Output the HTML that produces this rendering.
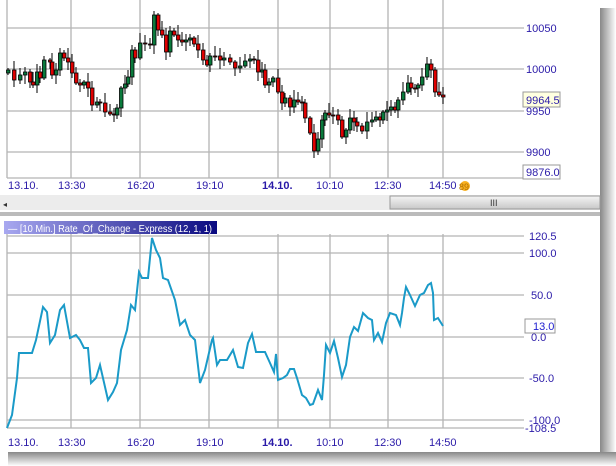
<!DOCTYPE html>
<html><head><meta charset="utf-8"><style>
html,body{margin:0;padding:0;background:#fff;width:616px;height:466px;overflow:hidden}
svg{display:block}
text{font-family:"Liberation Sans",sans-serif;font-size:11px;fill:#2a1aa8}
</style></head><body>
<svg id="s" width="616" height="466" viewBox="0 0 616 466">
<defs>
<linearGradient id="tb" x1="0" x2="1"><stop offset="0" stop-color="#a8a8f0"/><stop offset="1" stop-color="#0a0a80"/></linearGradient>
<linearGradient id="sh" x1="0" x2="1"><stop offset="0" stop-color="#888"/><stop offset="1" stop-color="#fff"/></linearGradient>
<linearGradient id="shb" x1="0" y1="0" x2="0" y2="1"><stop offset="0" stop-color="#888"/><stop offset="1" stop-color="#fff"/></linearGradient>
<linearGradient id="thumb" x1="0" y1="0" x2="0" y2="1"><stop offset="0" stop-color="#f4f4f4"/><stop offset="1" stop-color="#c8c8c8"/></linearGradient>
</defs>
<rect x="600" y="8" width="16" height="458" fill="url(#sh)"/>
<rect x="8" y="452" width="608" height="14" fill="url(#shb)"/>
<rect x="0" y="0" width="600" height="452" fill="#fff"/>
<g stroke="#b4b4b4" stroke-width="1.3" fill="none">
<path d="M7 0V178M71 0V178M140 0V178M209 0V178M278 0V178M330 0V178M388 0V178M443 0V178"/>
<path d="M7 28H524M7 69H524M7 111H524M7 152H524M7 178H524"/>
<path d="M7 234V428M71 234V428M140 234V428M209 234V428M278 234V428M330 234V428M388 234V428M443 234V428"/>
<path d="M7 236H524M7 253H524M7 295H524M7 337H524M7 378H524M7 420H524M7 428H524"/>
</g>
<g id="cd"></g>
<polyline fill="none" stroke="#1a9ac8" stroke-width="2" points="7,428 12,415 17,378 19,353 32,353 36,340 43,307 47,312 50,343 55,335 60,310 64,305 70,338 76,335 80,340 84,348 88,348 91,383 96,378 100,365 108,400 113,392 117,383 121,350 127,330 131,305 135,310 139,272 142,278 148,278 152,238 156,250 160,258 163,278 168,280 175,300 180,325 185,320 190,335 195,340 200,383 205,370 212,340 213,338 217,365 220,360 227,360 233,350 238,367 243,368 248,343 252,334 256,352 265,352 270,363 274,372 276,354 278,380 283,378 287,375 290,369 294,369 297,378 302,395 306,398 310,405 313,404 318,390 322,400 324,375 326,345 330,353 334,341 338,358 342,377 346,365 350,337 354,327 358,331 363,313 368,318 372,320 374,340 378,333 382,342 386,323 390,313 396,315 400,325 402,313 404,298 406,287 410,295 415,306 420,295 424,293 428,285 431,283 433,293 434,320 438,318 443,326"/>
<g>
<text x="526" y="32">10050</text><text x="526" y="73">10000</text><text x="526" y="115">9950</text><text x="526" y="156">9900</text>
<rect x="523" y="92" width="37" height="15" fill="#ffffe0" stroke="#999"/><text x="526" y="104">9964.5</text>
<rect x="523" y="165" width="37" height="14" fill="#fff" stroke="#999"/><text x="526" y="176">9876.0</text>
<text x="8" y="189">13.10.</text><text x="58" y="189">13:30</text><text x="127" y="189">16:20</text><text x="196" y="189">19:10</text><text x="262" y="189" style="font-weight:bold">14.10.</text><text x="316" y="189">10:10</text><text x="374" y="189">12:30</text><text x="429" y="189">14:50</text>
<circle cx="465" cy="186" r="5" fill="#f8b020"/><text x="459" y="190" style="font-size:9px;fill:#b07000">89</text>
<rect x="0" y="195" width="600" height="15" fill="#ececec"/><rect x="390" y="196" width="210" height="13" fill="url(#thumb)" stroke="#999"/>
<text x="490" y="206" style="font-size:9px;fill:#333">III</text><text x="3" y="207" style="font-size:8px;fill:#333">◂</text>
<path d="M0 213H600M0 215H600" stroke="#777"/>
<rect x="4" y="221" width="213" height="13" fill="url(#tb)"/>
<text x="8" y="232" textLength="204" lengthAdjust="spacingAndGlyphs" style="fill:#fff;font-size:10.5px">— [10 Min.] Rate_Of_Change - Express  (12, 1, 1)</text>
<text x="529" y="240">120.5</text><text x="529" y="257">100.0</text><text x="531" y="299">50.0</text><text x="531" y="341">0.0</text><text x="529" y="382">-50.0</text><text x="529" y="424">-100.0</text><text x="525" y="432">-108.5</text>
<rect x="525" y="319" width="30" height="14" fill="#fff" stroke="#999"/><text x="533" y="330" style="fill:#2020d0">13.0</text>
<text x="8" y="446">13.10.</text><text x="58" y="446">13:30</text><text x="127" y="446">16:20</text><text x="196" y="446">19:10</text><text x="262" y="446" style="font-weight:bold">14.10.</text><text x="316" y="446">10:10</text><text x="374" y="446">12:30</text><text x="429" y="446">14:50</text>
</g>
</svg>
<script>
var d=[[8,70],[14,80],[20,75],[25,72],[30,82],[33,85],[37,72],[40,78],[44,60],[50,62],[52,75],[56,70],[60,53],[64,58],[68,62],[72,73],[76,83],[80,85],[84,82],[88,88],[92,105],[97,102],[100,103],[105,112],[110,114],[114,115],[117,108],[121,88],[125,84],[128,77],[132,50],[135,58],[140,43],[145,44],[150,45],[154,15],[158,30],[162,35],[166,52],[170,31],[174,35],[178,40],[182,42],[186,40],[190,38],[194,44],[198,50],[203,60],[207,65],[210,56],[215,56],[220,60],[224,58],[230,62],[235,68],[240,66],[245,61],[250,59],[254,60],[258,72],[262,70],[265,85],[269,82],[273,78],[278,92],[282,103],[285,98],[290,107],[294,100],[298,102],[302,103],[305,118],[310,133],[314,151],[318,139],[322,120],[325,113],[329,115],[333,115],[338,120],[342,137],[346,130],[350,118],[354,122],[357,126],[362,131],[367,122],[372,120],[376,117],[380,120],[383,112],[387,110],[391,107],[395,110],[398,100],[403,92],[408,83],[411,88],[415,88],[418,85],[422,77],[427,64],[431,70],[435,92],[439,95],[443,97]];
var g=document.getElementById('cd'),h='',p=d[0][1]+3;
for(var i=0;i<d.length;i++){var x=d[i][0],c=d[i][1],o=p,t=Math.min(o,c),b=Math.max(o,c);if(b-t<1)b=t+1;
var hi=t-2-((i*7)%9),lo=b+2+((i*5)%8);
h+='<path d="M'+x+' '+hi+'V'+lo+'" stroke="#000"/>';
h+='<rect x="'+(x-1.5)+'" y="'+t+'" width="3.5" height="'+(b-t)+'" fill="'+(c<o?'#0a7a3c':'#e00000')+'" stroke="#000" stroke-width="0.8"/>';p=c;}
g.innerHTML=h;
</script>
</body></html>
